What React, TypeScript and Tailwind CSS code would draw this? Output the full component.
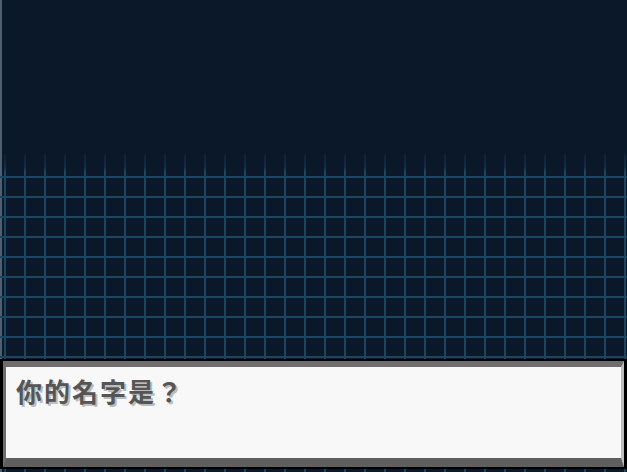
import React from "react";

export default function App() {
  return (
    <div className="relative flex h-[472px] w-[627px] flex-col overflow-hidden bg-[#0b1829] bg-[linear-gradient(to_right,#4d5f70_2px,transparent_2px)]">
      <div className="h-[152px] shrink-0" />
      <div className="flex flex-1 flex-col">
        <div className="relative flex flex-1 flex-col">
          <div className="absolute inset-0 bg-[linear-gradient(to_right,#1c4562_2px,transparent_2px)] bg-[size:20px_20px] bg-[position:4px_0px] [mask-image:linear-gradient(to_bottom,transparent_0px,rgba(0,0,0,0.3)_4px,rgba(0,0,0,0.45)_15px,black_20px)]" />
          <div className="absolute inset-x-0 top-[14px] bottom-0 bg-[linear-gradient(to_bottom,#1c4562_2px,transparent_2px)] bg-[size:20px_20px] bg-[position:0px_10px]" />
          <div className="relative mt-[207px] bg-black pt-[2px] pl-[3px] pr-[3px] pb-[2px]">
            <div className="h-[106px] border-t-[6px] border-l-[3px] border-r-[3px] border-b-[9px] border-t-[#6e6e6e] border-l-[#6e6e6e] border-r-[#bdbdbd] border-b-[#5f5f5f] bg-[#f8f8f8] pl-[10px] pt-[10px]">
              <p className="font-['Noto_Sans_CJK_JP',sans-serif] text-[26px] font-bold leading-[28px] tracking-[2px] text-[#555555] [text-shadow:2px_2px_0_#bcbcbc]">
                你的名字是？
              </p>
            </div>
          </div>
        </div>
      </div>
    </div>
  );
}
